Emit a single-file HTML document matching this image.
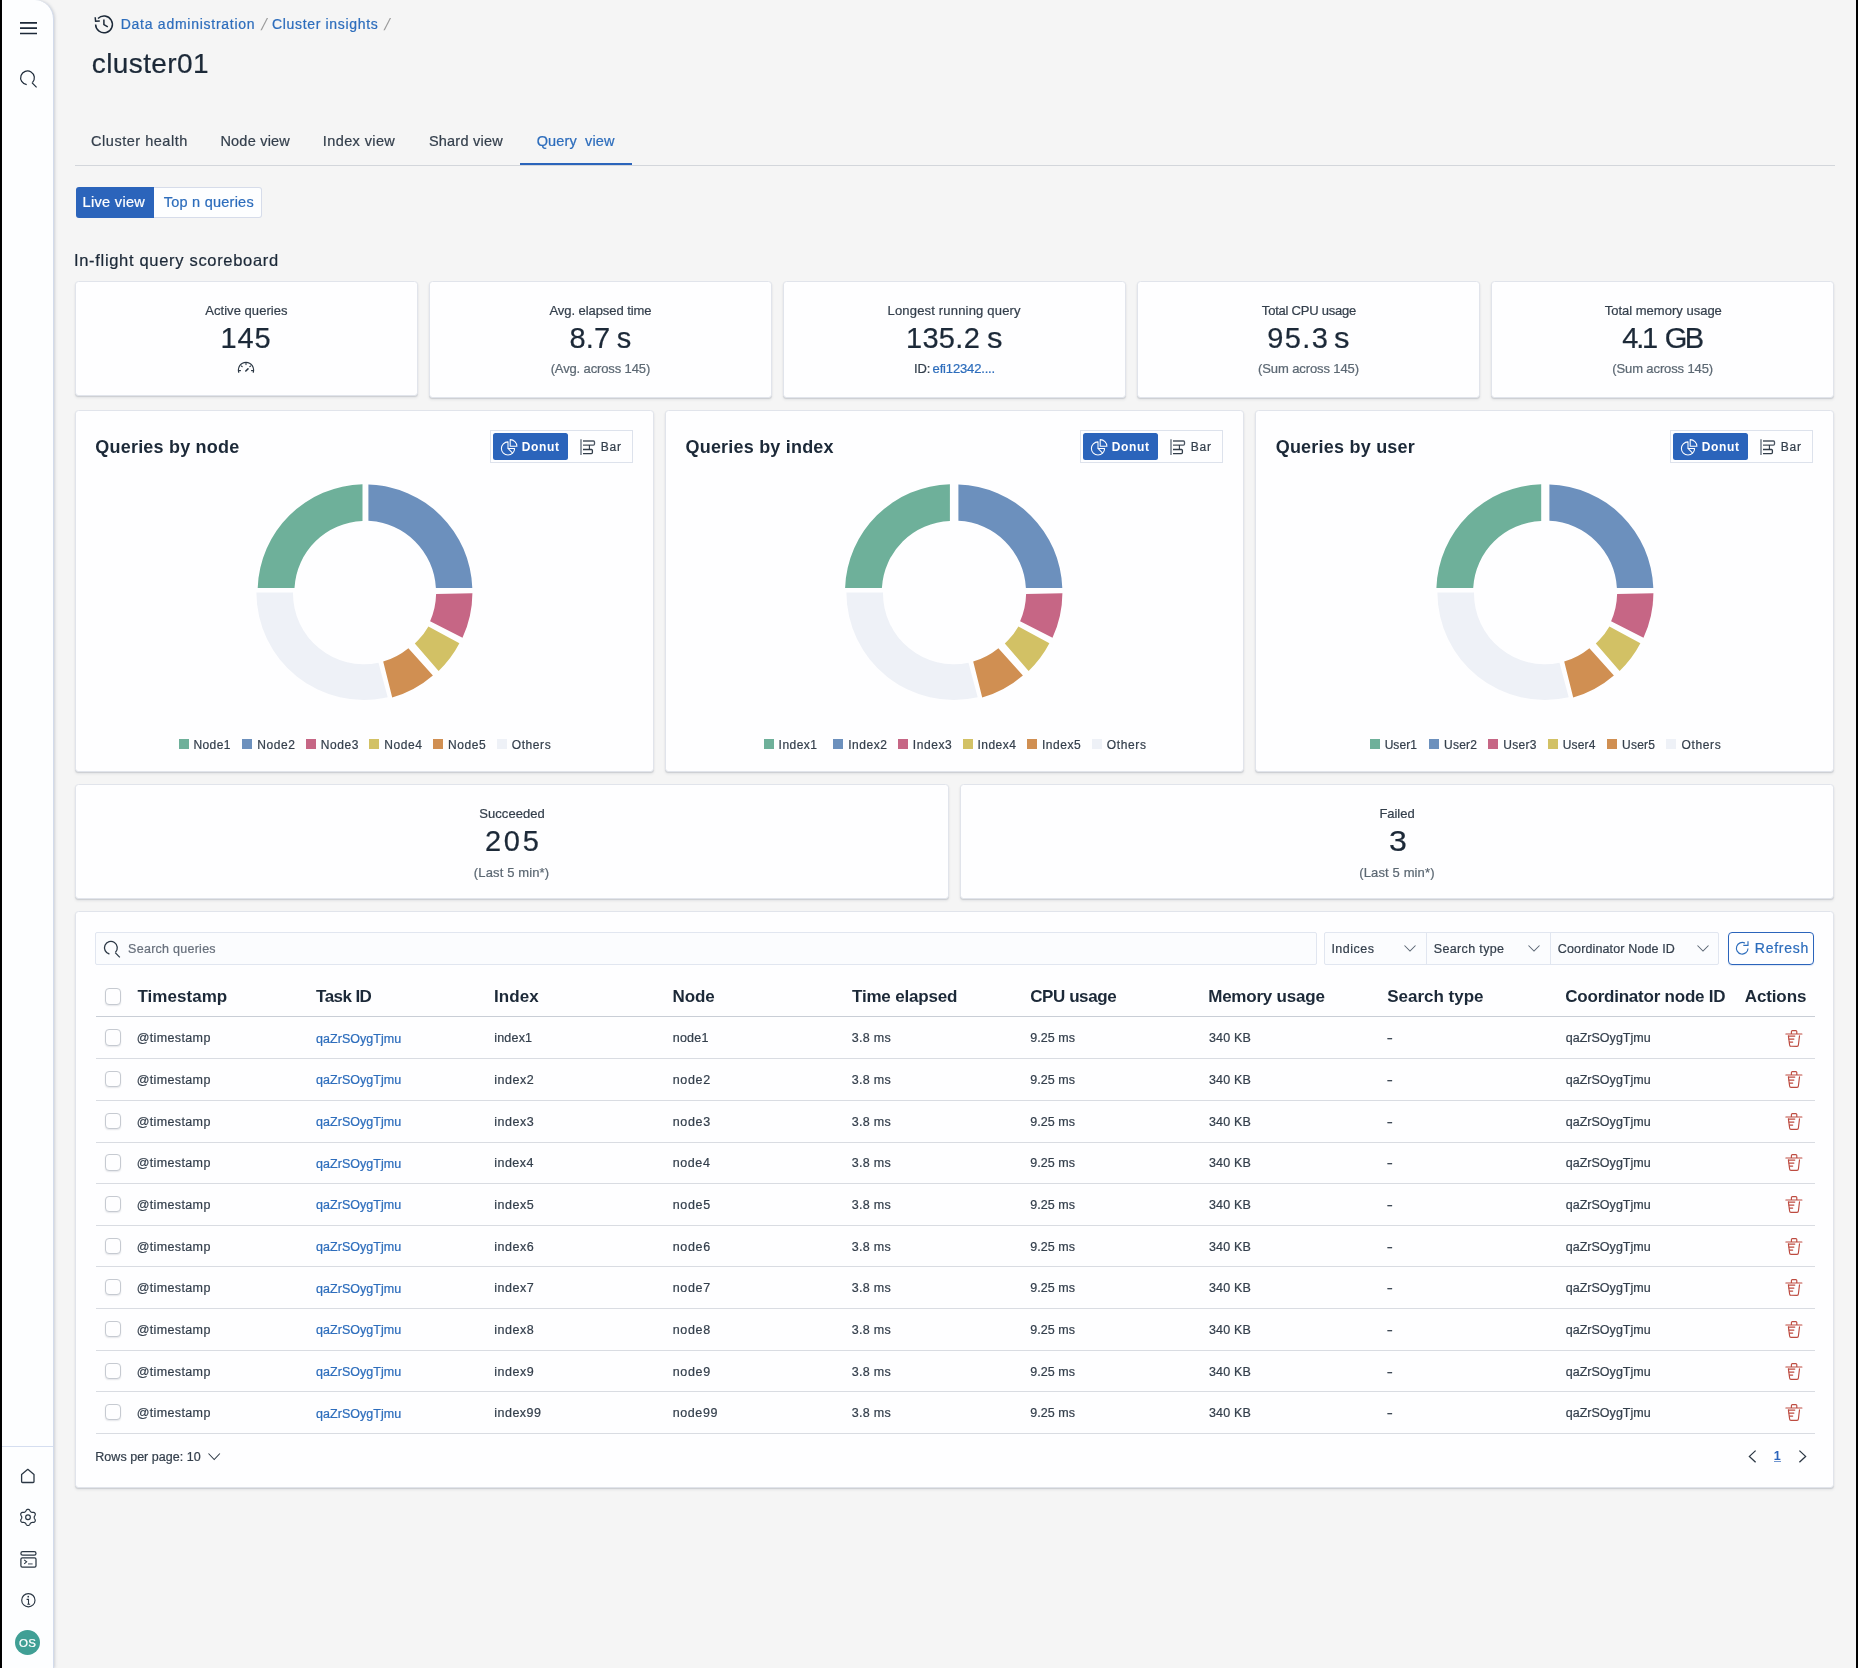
<!DOCTYPE html>
<html lang="en"><head><meta charset="utf-8"><title>cluster01 - Query view</title>
<style>
html,body{margin:0;padding:0}
body{width:1858px;height:1668px;position:relative;overflow:hidden;background:#f5f5f5;font-family:"Liberation Sans",sans-serif;}
#root{position:absolute;left:0;top:0;width:1858px;height:1668px;will-change:transform}
.t{position:absolute;white-space:pre;line-height:1;-webkit-text-stroke:0.22px currentColor;}
.b{position:absolute;box-sizing:border-box;}
.card{background:#fefeff;border:1px solid #e1e4eb;border-radius:3.5px;box-shadow:0 1px 1px rgba(40,50,70,.14),0 2px 3px rgba(40,50,70,.08);}
svg{position:absolute;overflow:visible}

.side{background:#fdfeff;border-right:1px solid #d3dbeb;border-top-right-radius:19px;box-shadow:1px 0 3px rgba(70,80,110,.22);}
.blk{background:#000}

</style></head><body><div id="root">
<div class="b blk" style="left:0px;top:0px;width:2px;height:1668px;"></div>
<div class="b blk" style="left:1856px;top:0px;width:2px;height:1668px;"></div>
<div class="b side" style="left:2px;top:0px;width:52px;height:1668px;"></div>
<div class="b " style="left:2px;top:1446px;width:51px;height:1px;background:#d5def0"></div>
<svg style="left:20px;top:21px" width="18" height="14" viewBox="0 0 18 14"><g stroke="#1c2938" stroke-width="1.7"><path d="M0 1.9H17M0 7.2H17M0 12.5H17"/></g></svg>
<svg style="left:19px;top:69.8px" width="20" height="20" viewBox="0 0 20 20" fill="none" stroke="#1c2938" stroke-width="1.2"><path d="M7.7 14.6A6.85 6.85 0 1 1 13.5 12.5"/><path d="M12.9 12.6L17.6 17.3"/></svg>
<svg style="left:19px;top:1467px" width="18" height="18" viewBox="0 0 18 18" fill="none" stroke="#2b3744" stroke-width="1.3" stroke-linejoin="round"><path d="M2.6 7.4L8.8 2.3L15 7.4V14.6a.9.9 0 0 1-.9.9H3.5a.9.9 0 0 1-.9-.9Z"/></svg>
<svg style="left:18px;top:1507px" width="20" height="20" viewBox="0 0 20 20" fill="none" stroke="#2b3744" stroke-width="1.2" stroke-linejoin="round"><path d="M10.00 2.30L10.53 2.37L11.03 2.58L11.49 2.93L11.85 3.49L12.15 4.07L12.46 4.47L12.77 4.79L13.10 5.03L13.47 5.20L13.91 5.31L14.41 5.37L15.06 5.34L15.72 5.38L16.25 5.60L16.69 5.93L17.01 6.35L17.22 6.84L17.28 7.38L17.21 7.95L16.91 8.55L16.56 9.10L16.36 9.56L16.24 9.99L16.20 10.40L16.24 10.81L16.36 11.24L16.56 11.70L16.91 12.25L17.21 12.85L17.28 13.42L17.22 13.96L17.01 14.45L16.69 14.87L16.25 15.20L15.72 15.42L15.06 15.46L14.41 15.43L13.91 15.49L13.47 15.60L13.10 15.77L12.77 16.01L12.46 16.33L12.15 16.73L11.85 17.31L11.49 17.87L11.03 18.22L10.53 18.43L10.00 18.50L9.47 18.43L8.97 18.22L8.51 17.87L8.15 17.31L7.85 16.73L7.54 16.33L7.23 16.01L6.90 15.77L6.53 15.60L6.09 15.49L5.59 15.43L4.94 15.46L4.28 15.42L3.75 15.20L3.31 14.87L2.99 14.45L2.78 13.96L2.72 13.42L2.79 12.85L3.09 12.25L3.44 11.70L3.64 11.24L3.76 10.81L3.80 10.40L3.76 9.99L3.64 9.56L3.44 9.10L3.09 8.55L2.79 7.95L2.72 7.38L2.78 6.84L2.99 6.35L3.31 5.93L3.75 5.60L4.28 5.38L4.94 5.34L5.59 5.37L6.09 5.31L6.53 5.20L6.90 5.03L7.23 4.79L7.54 4.47L7.85 4.07L8.15 3.49L8.51 2.93L8.97 2.58L9.47 2.37Z"/><circle cx="10" cy="10.3" r="2.35"/></svg>
<svg style="left:19px;top:1550px" width="19" height="19" viewBox="0 0 19 19" fill="none" stroke="#2b3744" stroke-width="1.25"><rect x="1.9" y="1.7" width="15.1" height="3.4" rx="1.7"/><rect x="1.9" y="7.8" width="15.1" height="9.3" rx="1.4"/><path d="M5.2 9.9L7.6 11.8L5.2 13.8" stroke-width="1.1"/><path d="M9 13.9H13.6" stroke="#6b7480" stroke-width="1.3"/></svg>
<svg style="left:19px;top:1591px" width="18" height="18" viewBox="0 0 18 18" fill="none" stroke="#2b3744" stroke-width="1.15"><circle cx="9.35" cy="9.2" r="6.65"/><path d="M7.6 8.4H9.5V13.1M8.3 13.2H11.1" stroke-width="1.1"/><circle cx="9.25" cy="5.65" r=".85" fill="#2b3744" stroke="none"/></svg>
<div class="b " style="left:15px;top:1630px;width:25px;height:25px;background:#409f95;border-radius:50%"></div>
<div class="t" style="left:19.10px;top:1638.00px;font-size:11.5px;color:#fff;letter-spacing:0.250px;">OS</div>
<svg style="left:93px;top:14px" width="22" height="21" viewBox="0 0 22 21" fill="none" stroke="#1c2938" stroke-width="1.5"><path d="M2.6 10.6A8.4 8.4 0 1 0 5 4.5"/><path d="M2.2 3.2L2.6 7.3L6.8 7" stroke-linejoin="miter"/><path d="M10.9 5.6V10.6L14.8 12.8"/></svg>
<div class="t" style="left:120.70px;top:17.00px;font-size:14px;color:#2d6dbc;letter-spacing:0.742px;">Data administration</div>
<div class="t" style="left:261.60px;top:16.00px;font-size:16.5px;color:#9c9c9c;letter-spacing:0.000px;transform:skewX(-14deg);-webkit-text-stroke:0">/</div>
<div class="t" style="left:272.00px;top:17.00px;font-size:14px;color:#2d6dbc;letter-spacing:0.670px;">Cluster insights</div>
<div class="t" style="left:384.70px;top:16.00px;font-size:16.5px;color:#9c9c9c;letter-spacing:0.000px;transform:skewX(-14deg);-webkit-text-stroke:0">/</div>
<div class="t" style="left:91.80px;top:50.00px;font-size:28px;color:#1c2938;letter-spacing:0.394px;">cluster01</div>
<div class="b " style="left:75px;top:165px;width:1760px;height:1px;background:#d3d6db"></div>
<div class="t" style="left:91.10px;top:134.00px;font-size:14.5px;color:#343f4c;letter-spacing:0.519px;">Cluster health</div>
<div class="t" style="left:220.40px;top:134.00px;font-size:14.5px;color:#343f4c;letter-spacing:0.219px;">Node view</div>
<div class="t" style="left:322.85px;top:134.00px;font-size:14.5px;color:#343f4c;letter-spacing:0.383px;">Index view</div>
<div class="t" style="left:428.90px;top:134.00px;font-size:14.5px;color:#343f4c;letter-spacing:0.228px;">Shard view</div>
<div class="t" style="left:536.70px;top:134.00px;font-size:14.5px;color:#2d6dbc;letter-spacing:0.120px;">Query  view</div>
<div class="b " style="left:520px;top:163px;width:112px;height:2px;background:#2b64bb"></div>
<div class="b " style="left:76px;top:187px;width:78px;height:31px;background:#2b64bb;border-radius:3px 0 0 3px"></div>
<div class="b " style="left:154px;top:187px;width:107.5px;height:31px;background:#fdfeff;border:1px solid #d6dcea;border-left:0;border-radius:0 3px 3px 0"></div>
<div class="t" style="left:82.60px;top:195.00px;font-size:14.5px;color:#fff;letter-spacing:0.319px;">Live view</div>
<div class="t" style="left:163.75px;top:195.00px;font-size:14.5px;color:#2d6dbc;letter-spacing:0.237px;">Top n queries</div>
<div class="t" style="left:74.00px;top:252.00px;font-size:16.5px;color:#1c2938;letter-spacing:0.682px;">In-flight query scoreboard</div>
<div class="b card" style="left:75px;top:281px;width:343px;height:115px;"></div>
<div class="b card" style="left:429px;top:281px;width:343px;height:117px;"></div>
<div class="b card" style="left:783px;top:281px;width:343px;height:117px;"></div>
<div class="b card" style="left:1137px;top:281px;width:343px;height:117px;"></div>
<div class="b card" style="left:1491px;top:281px;width:343px;height:117px;"></div>
<div class="t" style="left:205.20px;top:304.00px;font-size:13px;color:#343f4c;letter-spacing:0.054px;">Active queries</div>
<div class="t" style="left:220.50px;top:324.00px;font-size:29px;color:#1c2938;letter-spacing:0.875px;">145</div>
<div class="t" style="left:549.40px;top:304.00px;font-size:13px;color:#343f4c;letter-spacing:-0.059px;">Avg. elapsed time</div>
<div class="t" style="left:569.45px;top:324.00px;font-size:29px;color:#1c2938;letter-spacing:0.225px;">8.7</div>
<div class="t" style="left:616.85px;top:324.00px;font-size:29px;color:#1c2938;letter-spacing:0.000px;">s</div>
<div class="t" style="left:550.65px;top:362.00px;font-size:13px;color:#5c6873;letter-spacing:-0.128px;">(Avg. across 145)</div>
<div class="t" style="left:887.50px;top:304.00px;font-size:13px;color:#343f4c;letter-spacing:0.185px;">Longest running query</div>
<div class="t" style="left:905.90px;top:324.00px;font-size:29px;color:#1c2938;letter-spacing:0.363px;">135.2</div>
<div class="t" style="left:986.55px;top:324.00px;font-size:29px;color:#1c2938;letter-spacing:0.000px;transform:scaleX(1.067);transform-origin:0.75px 50%;">s</div>
<div class="t" style="left:914.00px;top:362.00px;font-size:13px;color:#343f4c;letter-spacing:-0.150px;">ID:</div>
<div class="t" style="left:932.60px;top:362.00px;font-size:13px;color:#2d6dbc;letter-spacing:-0.159px;">efi12342....</div>
<div class="t" style="left:1261.85px;top:304.00px;font-size:13px;color:#343f4c;letter-spacing:-0.218px;">Total CPU usage</div>
<div class="t" style="left:1267.15px;top:324.00px;font-size:29px;color:#1c2938;letter-spacing:1.400px;">95.3</div>
<div class="t" style="left:1334.45px;top:324.00px;font-size:29px;color:#1c2938;letter-spacing:0.000px;transform:scaleX(1.067);transform-origin:0.75px 50%;">s</div>
<div class="t" style="left:1258.05px;top:362.00px;font-size:13px;color:#5c6873;letter-spacing:-0.110px;">(Sum across 145)</div>
<div class="t" style="left:1604.65px;top:304.00px;font-size:13px;color:#343f4c;letter-spacing:0.009px;">Total memory usage</div>
<div class="t" style="left:1622.30px;top:324.00px;font-size:29px;color:#1c2938;letter-spacing:-2.300px;">4.1</div>
<div class="t" style="left:1664.85px;top:324.00px;font-size:29px;color:#1c2938;letter-spacing:-2.550px;">GB</div>
<div class="t" style="left:1612.25px;top:362.00px;font-size:13px;color:#5c6873;letter-spacing:-0.110px;">(Sum across 145)</div>
<svg style="left:236.7px;top:361px" width="18" height="13" viewBox="0 0 18 13" fill="none" stroke="#2b3744" stroke-width="1.12" stroke-linecap="round"><path d="M1.9 11.7A7.6 7.6 0 1 1 16.1 11.7" stroke-linecap="butt"/><path d="M8.8 10L11 7.9" stroke-width="1.55"/><path d="M9 1.8V3.6M4.4 5L5.2 5.7M13.6 5L12.8 5.7M1.9 9.6H3.5M16.1 9.6H14.5" stroke-width="1.1"/></svg>
<div class="b card" style="left:75px;top:410px;width:579px;height:362px;"></div>
<div class="b " style="left:490px;top:430px;width:143px;height:33px;border:1px solid #dde2ec;background:#fefeff"></div>
<div class="b " style="left:493px;top:433px;width:75px;height:27px;background:#2b64bb;border-radius:2.5px"></div>
<div class="t" style="left:521.85px;top:441.00px;font-size:12px;color:#fff;letter-spacing:0.600px;font-weight:700;-webkit-text-stroke:0;">Donut</div>
<div class="t" style="left:600.85px;top:441.00px;font-size:12px;color:#343f4c;letter-spacing:0.700px;">Bar</div>
<svg style="left:500px;top:438px" width="18" height="18" viewBox="0 0 18 18" fill="none" stroke="#fff" stroke-width="1.05" stroke-linejoin="round"><path d="M8 3.85A6.6 6.6 0 1 0 14.6 10.45H8Z"/><path d="M8 10.45L12.65 15.1"/><path d="M10.2 8.3V1.6A6.7 6.7 0 0 1 16.9 8.3Z"/></svg>
<svg style="left:579px;top:439px" width="17" height="17" viewBox="0 0 17 17" fill="none" stroke="#323d4a" stroke-width="1.3"><path d="M2 0.3V16" stroke="#8a929d" stroke-width="1.8"/><path d="M4 2H14.5a1 1 0 0 1 1 1V5.1a1 1 0 0 1-1 1H4" stroke="#4a5461"/><path d="M10.4 6.1V10.5" stroke-width="1.1"/><path d="M4 10.5H12.4a1 1 0 0 1 1 1V13.6a1 1 0 0 1-1 1H4"/></svg>
<div class="b card" style="left:665px;top:410px;width:579px;height:362px;"></div>
<div class="b " style="left:1080px;top:430px;width:143px;height:33px;border:1px solid #dde2ec;background:#fefeff"></div>
<div class="b " style="left:1083px;top:433px;width:75px;height:27px;background:#2b64bb;border-radius:2.5px"></div>
<div class="t" style="left:1111.85px;top:441.00px;font-size:12px;color:#fff;letter-spacing:0.600px;font-weight:700;-webkit-text-stroke:0;">Donut</div>
<div class="t" style="left:1190.85px;top:441.00px;font-size:12px;color:#343f4c;letter-spacing:0.700px;">Bar</div>
<svg style="left:1090px;top:438px" width="18" height="18" viewBox="0 0 18 18" fill="none" stroke="#fff" stroke-width="1.05" stroke-linejoin="round"><path d="M8 3.85A6.6 6.6 0 1 0 14.6 10.45H8Z"/><path d="M8 10.45L12.65 15.1"/><path d="M10.2 8.3V1.6A6.7 6.7 0 0 1 16.9 8.3Z"/></svg>
<svg style="left:1169px;top:439px" width="17" height="17" viewBox="0 0 17 17" fill="none" stroke="#323d4a" stroke-width="1.3"><path d="M2 0.3V16" stroke="#8a929d" stroke-width="1.8"/><path d="M4 2H14.5a1 1 0 0 1 1 1V5.1a1 1 0 0 1-1 1H4" stroke="#4a5461"/><path d="M10.4 6.1V10.5" stroke-width="1.1"/><path d="M4 10.5H12.4a1 1 0 0 1 1 1V13.6a1 1 0 0 1-1 1H4"/></svg>
<div class="b card" style="left:1255px;top:410px;width:579px;height:362px;"></div>
<div class="b " style="left:1670px;top:430px;width:143px;height:33px;border:1px solid #dde2ec;background:#fefeff"></div>
<div class="b " style="left:1673px;top:433px;width:75px;height:27px;background:#2b64bb;border-radius:2.5px"></div>
<div class="t" style="left:1701.85px;top:441.00px;font-size:12px;color:#fff;letter-spacing:0.600px;font-weight:700;-webkit-text-stroke:0;">Donut</div>
<div class="t" style="left:1780.85px;top:441.00px;font-size:12px;color:#343f4c;letter-spacing:0.700px;">Bar</div>
<svg style="left:1680px;top:438px" width="18" height="18" viewBox="0 0 18 18" fill="none" stroke="#fff" stroke-width="1.05" stroke-linejoin="round"><path d="M8 3.85A6.6 6.6 0 1 0 14.6 10.45H8Z"/><path d="M8 10.45L12.65 15.1"/><path d="M10.2 8.3V1.6A6.7 6.7 0 0 1 16.9 8.3Z"/></svg>
<svg style="left:1759px;top:439px" width="17" height="17" viewBox="0 0 17 17" fill="none" stroke="#323d4a" stroke-width="1.3"><path d="M2 0.3V16" stroke="#8a929d" stroke-width="1.8"/><path d="M4 2H14.5a1 1 0 0 1 1 1V5.1a1 1 0 0 1-1 1H4" stroke="#4a5461"/><path d="M10.4 6.1V10.5" stroke-width="1.1"/><path d="M4 10.5H12.4a1 1 0 0 1 1 1V13.6a1 1 0 0 1-1 1H4"/></svg>
<div class="t" style="left:95.30px;top:438.00px;font-size:18px;color:#1c2938;letter-spacing:0.207px;font-weight:700;-webkit-text-stroke:0;">Queries by node</div>
<div class="t" style="left:685.50px;top:438.00px;font-size:18px;color:#1c2938;letter-spacing:0.200px;font-weight:700;-webkit-text-stroke:0;">Queries by index</div>
<div class="t" style="left:1275.70px;top:438.00px;font-size:18px;color:#1c2938;letter-spacing:0.218px;font-weight:700;-webkit-text-stroke:0;">Queries by user</div>
<svg style="left:0px;top:0" width="600" height="800" viewBox="0 0 600 800"><g transform="translate(0 0)"><path fill="#6eb09a" d="M257.70 587.90A107.4 107.4 0 0 1 362.50 484.30L362.50 521.10A70.6 70.6 0 0 0 294.50 587.90Z"/></g><path fill="#6c90bd" d="M368.40 484.40A107.3 107.3 0 0 1 472.30 588.00L435.90 588.00A71 71 0 0 0 368.40 520.80Z"/><path fill="#c66685" d="M472.40 593.20A107.5 107.5 0 0 1 462.50 637.70L430.10 621.20A71 71 0 0 0 436.10 594.00Z"/><path fill="#d2c165" d="M459.40 643.30A107.5 107.5 0 0 1 438.60 671.00L414.80 643.40A71 71 0 0 0 428.40 626.40Z"/><path fill="#d08f52" d="M432.90 675.40A107.5 107.5 0 0 1 392.20 697.40L383.20 661.60A71 71 0 0 0 408.40 648.30Z"/><path fill="#eef1f7" d="M387.70 697.30A107.5 107.5 0 0 1 256.40 592.40L293.00 592.40A71 71 0 0 0 378.50 662.80Z"/></svg>
<svg style="left:590px;top:0" width="600" height="800" viewBox="0 0 600 800"><g transform="translate(-2.6 0)"><path fill="#6eb09a" d="M257.70 587.90A107.4 107.4 0 0 1 362.50 484.30L362.50 521.10A70.6 70.6 0 0 0 294.50 587.90Z"/></g><path fill="#6c90bd" d="M368.40 484.40A107.3 107.3 0 0 1 472.30 588.00L435.90 588.00A71 71 0 0 0 368.40 520.80Z"/><path fill="#c66685" d="M472.40 593.20A107.5 107.5 0 0 1 462.50 637.70L430.10 621.20A71 71 0 0 0 436.10 594.00Z"/><path fill="#d2c165" d="M459.40 643.30A107.5 107.5 0 0 1 438.60 671.00L414.80 643.40A71 71 0 0 0 428.40 626.40Z"/><path fill="#d08f52" d="M432.90 675.40A107.5 107.5 0 0 1 392.20 697.40L383.20 661.60A71 71 0 0 0 408.40 648.30Z"/><path fill="#eef1f7" d="M387.70 697.30A107.5 107.5 0 0 1 256.40 592.40L293.00 592.40A71 71 0 0 0 378.50 662.80Z"/></svg>
<svg style="left:1180.6px;top:0" width="600" height="800" viewBox="0 0 600 800"><g transform="translate(-2.3 0)"><path fill="#6eb09a" d="M257.70 587.90A107.4 107.4 0 0 1 362.50 484.30L362.50 521.10A70.6 70.6 0 0 0 294.50 587.90Z"/></g><path fill="#6c90bd" d="M368.40 484.40A107.3 107.3 0 0 1 472.30 588.00L435.90 588.00A71 71 0 0 0 368.40 520.80Z"/><path fill="#c66685" d="M472.40 593.20A107.5 107.5 0 0 1 462.50 637.70L430.10 621.20A71 71 0 0 0 436.10 594.00Z"/><path fill="#d2c165" d="M459.40 643.30A107.5 107.5 0 0 1 438.60 671.00L414.80 643.40A71 71 0 0 0 428.40 626.40Z"/><path fill="#d08f52" d="M432.90 675.40A107.5 107.5 0 0 1 392.20 697.40L383.20 661.60A71 71 0 0 0 408.40 648.30Z"/><path fill="#eef1f7" d="M387.70 697.30A107.5 107.5 0 0 1 256.40 592.40L293.00 592.40A71 71 0 0 0 378.50 662.80Z"/></svg>
<div class="b " style="left:178.5px;top:739.3px;width:10.300000000000011px;height:10.0px;background:#6eb09a"></div>
<div class="t" style="left:193.55px;top:739.00px;font-size:12px;color:#343f4c;letter-spacing:0.362px;">Node1</div>
<div class="b " style="left:242.0px;top:739.3px;width:10.300000000000011px;height:10.0px;background:#6c90bd"></div>
<div class="t" style="left:257.15px;top:739.00px;font-size:12px;color:#343f4c;letter-spacing:0.588px;">Node2</div>
<div class="b " style="left:305.5px;top:739.3px;width:10.300000000000011px;height:10.0px;background:#c66685"></div>
<div class="t" style="left:320.75px;top:739.00px;font-size:12px;color:#343f4c;letter-spacing:0.588px;">Node3</div>
<div class="b " style="left:369.0px;top:739.3px;width:10.300000000000011px;height:10.0px;background:#d2c165"></div>
<div class="t" style="left:384.35px;top:739.00px;font-size:12px;color:#343f4c;letter-spacing:0.525px;">Node4</div>
<div class="b " style="left:432.5px;top:739.3px;width:10.300000000000011px;height:10.0px;background:#d08f52"></div>
<div class="t" style="left:447.95px;top:739.00px;font-size:12px;color:#343f4c;letter-spacing:0.588px;">Node5</div>
<div class="b " style="left:496.5px;top:739.3px;width:10.300000000000011px;height:10.0px;background:#eef1f7"></div>
<div class="t" style="left:511.80px;top:739.00px;font-size:12px;color:#343f4c;letter-spacing:0.570px;">Others</div>
<div class="b " style="left:763.5px;top:739.3px;width:10.299999999999955px;height:10.0px;background:#6eb09a"></div>
<div class="t" style="left:778.60px;top:739.00px;font-size:12px;color:#343f4c;letter-spacing:0.460px;">Index1</div>
<div class="b " style="left:833.0px;top:739.3px;width:10.299999999999955px;height:10.0px;background:#6c90bd"></div>
<div class="t" style="left:848.20px;top:739.00px;font-size:12px;color:#343f4c;letter-spacing:0.560px;">Index2</div>
<div class="b " style="left:898.0px;top:739.3px;width:10.299999999999955px;height:10.0px;background:#c66685"></div>
<div class="t" style="left:912.80px;top:739.00px;font-size:12px;color:#343f4c;letter-spacing:0.560px;">Index3</div>
<div class="b " style="left:962.5px;top:739.3px;width:10.299999999999955px;height:10.0px;background:#d2c165"></div>
<div class="t" style="left:977.40px;top:739.00px;font-size:12px;color:#343f4c;letter-spacing:0.510px;">Index4</div>
<div class="b " style="left:1027.0px;top:739.3px;width:10.299999999999955px;height:10.0px;background:#d08f52"></div>
<div class="t" style="left:1041.90px;top:739.00px;font-size:12px;color:#343f4c;letter-spacing:0.560px;">Index5</div>
<div class="b " style="left:1091.5px;top:739.3px;width:10.299999999999955px;height:10.0px;background:#eef1f7"></div>
<div class="t" style="left:1106.80px;top:739.00px;font-size:12px;color:#343f4c;letter-spacing:0.630px;">Others</div>
<div class="b " style="left:1369.5px;top:739.3px;width:10.299999999999955px;height:10.0px;background:#6eb09a"></div>
<div class="t" style="left:1384.65px;top:739.00px;font-size:12px;color:#343f4c;letter-spacing:0.062px;">User1</div>
<div class="b " style="left:1429.0px;top:739.3px;width:10.299999999999955px;height:10.0px;background:#6c90bd"></div>
<div class="t" style="left:1444.05px;top:739.00px;font-size:12px;color:#343f4c;letter-spacing:0.238px;">User2</div>
<div class="b " style="left:1488.0px;top:739.3px;width:10.299999999999955px;height:10.0px;background:#c66685"></div>
<div class="t" style="left:1503.35px;top:739.00px;font-size:12px;color:#343f4c;letter-spacing:0.238px;">User3</div>
<div class="b " style="left:1547.5px;top:739.3px;width:10.299999999999955px;height:10.0px;background:#d2c165"></div>
<div class="t" style="left:1562.65px;top:739.00px;font-size:12px;color:#343f4c;letter-spacing:0.175px;">User4</div>
<div class="b " style="left:1607.0px;top:739.3px;width:10.299999999999955px;height:10.0px;background:#d08f52"></div>
<div class="t" style="left:1622.05px;top:739.00px;font-size:12px;color:#343f4c;letter-spacing:0.238px;">User5</div>
<div class="b " style="left:1666.0px;top:739.3px;width:10.299999999999955px;height:10.0px;background:#eef1f7"></div>
<div class="t" style="left:1681.60px;top:739.00px;font-size:12px;color:#343f4c;letter-spacing:0.610px;">Others</div>
<div class="b card" style="left:75px;top:784px;width:874px;height:115px;"></div>
<div class="b card" style="left:960px;top:784px;width:874px;height:115px;"></div>
<div class="t" style="left:479.30px;top:807.00px;font-size:13px;color:#343f4c;letter-spacing:0.056px;">Succeeded</div>
<div class="t" style="left:484.90px;top:827.00px;font-size:29px;color:#1c2938;letter-spacing:2.850px;">205</div>
<div class="t" style="left:473.85px;top:866.00px;font-size:13px;color:#5c6873;letter-spacing:0.129px;">(Last 5 min*)</div>
<div class="t" style="left:1379.40px;top:807.00px;font-size:13px;color:#343f4c;letter-spacing:-0.030px;">Failed</div>
<div class="t" style="left:1388.50px;top:827.00px;font-size:29px;color:#1c2938;letter-spacing:0.000px;transform:scaleX(1.107);transform-origin:1.00px 50%;">3</div>
<div class="t" style="left:1359.25px;top:866.00px;font-size:13px;color:#5c6873;letter-spacing:0.129px;">(Last 5 min*)</div>
<div class="b card" style="left:75px;top:911px;width:1759px;height:577px;"></div>
<div class="b " style="left:95px;top:932px;width:1221.5px;height:32.5px;background:#fbfcfe;border:1px solid #e1e6f0;border-radius:2px"></div>
<svg style="left:103px;top:939.6px" width="20" height="20" viewBox="0 0 20 20" fill="none" stroke="#2b3744" stroke-width="1.3"><path d="M6.4 14A6.4 6.4 0 1 1 12.5 12.2"/><path d="M12.2 12.6L16.8 17.4"/></svg>
<div class="t" style="left:128.10px;top:943.00px;font-size:12.5px;color:#69717d;letter-spacing:0.265px;">Search queries</div>
<div class="b " style="left:1324px;top:932px;width:394.5px;height:33px;background:#fbfcfe;border:1px solid #e1e6f0;border-radius:2px"></div>
<div class="b " style="left:1426px;top:933px;width:1px;height:31px;background:#e1e6f0"></div>
<div class="b " style="left:1550px;top:933px;width:1px;height:31px;background:#e1e6f0"></div>
<div class="t" style="left:1331.40px;top:943.00px;font-size:12.5px;color:#343f4c;letter-spacing:0.492px;">Indices</div>
<div class="t" style="left:1433.70px;top:943.00px;font-size:12.5px;color:#343f4c;letter-spacing:0.365px;">Search type</div>
<div class="t" style="left:1557.80px;top:943.00px;font-size:12.5px;color:#343f4c;letter-spacing:0.136px;">Coordinator Node ID</div>
<svg style="left:1404.4px;top:945.3px" width="12" height="6.8" viewBox="0 0 12 6.8" fill="none" stroke="#5a6573" stroke-width="1.05"><path d="M0.5 0.5L6.0 6.1L11.5 0.5"/></svg>
<svg style="left:1528.2px;top:945.3px" width="12" height="6.8" viewBox="0 0 12 6.8" fill="none" stroke="#5a6573" stroke-width="1.05"><path d="M0.5 0.5L6.0 6.1L11.5 0.5"/></svg>
<svg style="left:1696.6px;top:945.3px" width="12" height="6.8" viewBox="0 0 12 6.8" fill="none" stroke="#5a6573" stroke-width="1.05"><path d="M0.5 0.5L6.0 6.1L11.5 0.5"/></svg>
<div class="b " style="left:1728px;top:932px;width:86px;height:33px;background:#fefeff;border:1px solid #2b64bb;border-radius:4px;box-shadow:0 1px 1px rgba(43,100,187,.15)"></div>
<svg style="left:1735px;top:941px" width="15" height="15" viewBox="0 0 15 15" fill="none" stroke="#2d6dbc" stroke-width="1.15"><path d="M9.92 2.13A5.8 5.8 0 1 0 13 7.45"/><path d="M13 0.3V4.3H8.3"/></svg>
<div class="t" style="left:1754.80px;top:941.00px;font-size:14px;color:#2d6dbc;letter-spacing:0.742px;">Refresh</div>
<div class="t" style="left:137.40px;top:988.00px;font-size:17px;color:#1c2938;letter-spacing:0.044px;font-weight:700;-webkit-text-stroke:0;">Timestamp</div>
<div class="t" style="left:316.10px;top:988.00px;font-size:17px;color:#1c2938;letter-spacing:-0.575px;font-weight:700;-webkit-text-stroke:0;">Task ID</div>
<div class="t" style="left:494.00px;top:988.00px;font-size:17px;color:#1c2938;letter-spacing:0.050px;font-weight:700;-webkit-text-stroke:0;">Index</div>
<div class="t" style="left:672.50px;top:988.00px;font-size:17px;color:#1c2938;letter-spacing:-0.100px;font-weight:700;-webkit-text-stroke:0;">Node</div>
<div class="t" style="left:852.00px;top:988.00px;font-size:17px;color:#1c2938;letter-spacing:-0.182px;font-weight:700;-webkit-text-stroke:0;">Time elapsed</div>
<div class="t" style="left:1030.20px;top:988.00px;font-size:17px;color:#1c2938;letter-spacing:-0.419px;font-weight:700;-webkit-text-stroke:0;">CPU usage</div>
<div class="t" style="left:1208.20px;top:988.00px;font-size:17px;color:#1c2938;letter-spacing:-0.218px;font-weight:700;-webkit-text-stroke:0;">Memory usage</div>
<div class="t" style="left:1387.20px;top:988.00px;font-size:17px;color:#1c2938;letter-spacing:0.000px;font-weight:700;-webkit-text-stroke:0;">Search type</div>
<div class="t" style="left:1565.30px;top:988.00px;font-size:17px;color:#1c2938;letter-spacing:-0.225px;font-weight:700;-webkit-text-stroke:0;">Coordinator node ID</div>
<div class="t" style="left:1744.75px;top:988.00px;font-size:17px;color:#1c2938;letter-spacing:-0.125px;font-weight:700;-webkit-text-stroke:0;">Actions</div>
<div class="b " style="left:104.5px;top:988.4px;width:16.200000000000003px;height:16.200000000000045px;background:#fefeff;border:1px solid #c6cad1;border-radius:4px;box-shadow:0 1px 1.5px rgba(50,60,80,.12)"></div>
<div class="b " style="left:95.5px;top:1016px;width:1719.5px;height:1px;background:#c9ced6"></div>
<div class="b " style="left:104.5px;top:1029.4px;width:16.200000000000003px;height:16.200000000000045px;background:#fefeff;border:1px solid #c6cad1;border-radius:4px;box-shadow:0 1px 1.5px rgba(50,60,80,.12)"></div>
<div class="t" style="left:136.65px;top:1032.00px;font-size:12.5px;color:#343f4c;letter-spacing:0.372px;">@timestamp</div>
<div class="t" style="left:316.00px;top:1033.00px;font-size:12.5px;color:#2d6dbc;letter-spacing:0.045px;">qaZrSOygTjmu</div>
<div class="t" style="left:494.25px;top:1032.00px;font-size:12.5px;color:#343f4c;letter-spacing:0.190px;">index1</div>
<div class="t" style="left:672.75px;top:1032.00px;font-size:12.5px;color:#343f4c;letter-spacing:0.225px;">node1</div>
<div class="t" style="left:851.75px;top:1032.00px;font-size:12.5px;color:#343f4c;letter-spacing:0.280px;">3.8 ms</div>
<div class="t" style="left:1030.20px;top:1032.00px;font-size:12.5px;color:#343f4c;letter-spacing:0.042px;">9.25 ms</div>
<div class="t" style="left:1208.95px;top:1032.00px;font-size:12.5px;color:#343f4c;letter-spacing:0.170px;">340 KB</div>
<div class="t" style="left:1387.20px;top:1032.00px;font-size:12.5px;color:#343f4c;letter-spacing:0.000px;transform:scaleX(1.446);transform-origin:0.50px 50%;">-</div>
<div class="t" style="left:1565.70px;top:1032.00px;font-size:12.5px;color:#343f4c;letter-spacing:0.027px;">qaZrSOygTjmu</div>
<svg style="left:1785px;top:1028.50px" width="18" height="18" viewBox="0 0 18 18" fill="none" stroke="#bd4b40" stroke-width="1.15"><path d="M0.9 5H16.9" stroke-linecap="round"/><path d="M6.4 5V2.6a1 1 0 0 1 1-1H10.8a1 1 0 0 1 1 1V5"/><path d="M3.4 6.9L4.6 16a1.4 1.4 0 0 0 1.4 1.3H12a1.4 1.4 0 0 0 1.4-1.3L14.5 6.9" stroke-linecap="round"/><path d="M3.7 7.1H9.8M4 10.1H8.9M4.5 13.1H7.7" stroke-linecap="round"/></svg>
<div class="b " style="left:95.5px;top:1058px;width:1719.5px;height:1px;background:#d9dce2"></div>
<div class="b " style="left:104.5px;top:1071.0500000000002px;width:16.200000000000003px;height:16.200000000000045px;background:#fefeff;border:1px solid #c6cad1;border-radius:4px;box-shadow:0 1px 1.5px rgba(50,60,80,.12)"></div>
<div class="t" style="left:136.65px;top:1074.00px;font-size:12.5px;color:#343f4c;letter-spacing:0.372px;">@timestamp</div>
<div class="t" style="left:316.00px;top:1074.00px;font-size:12.5px;color:#2d6dbc;letter-spacing:0.045px;">qaZrSOygTjmu</div>
<div class="t" style="left:494.25px;top:1074.00px;font-size:12.5px;color:#343f4c;letter-spacing:0.530px;">index2</div>
<div class="t" style="left:672.75px;top:1074.00px;font-size:12.5px;color:#343f4c;letter-spacing:0.650px;">node2</div>
<div class="t" style="left:851.75px;top:1074.00px;font-size:12.5px;color:#343f4c;letter-spacing:0.280px;">3.8 ms</div>
<div class="t" style="left:1030.20px;top:1074.00px;font-size:12.5px;color:#343f4c;letter-spacing:0.042px;">9.25 ms</div>
<div class="t" style="left:1208.95px;top:1074.00px;font-size:12.5px;color:#343f4c;letter-spacing:0.170px;">340 KB</div>
<div class="t" style="left:1387.20px;top:1074.00px;font-size:12.5px;color:#343f4c;letter-spacing:0.000px;transform:scaleX(1.446);transform-origin:0.50px 50%;">-</div>
<div class="t" style="left:1565.70px;top:1074.00px;font-size:12.5px;color:#343f4c;letter-spacing:0.027px;">qaZrSOygTjmu</div>
<svg style="left:1785px;top:1070.15px" width="18" height="18" viewBox="0 0 18 18" fill="none" stroke="#bd4b40" stroke-width="1.15"><path d="M0.9 5H16.9" stroke-linecap="round"/><path d="M6.4 5V2.6a1 1 0 0 1 1-1H10.8a1 1 0 0 1 1 1V5"/><path d="M3.4 6.9L4.6 16a1.4 1.4 0 0 0 1.4 1.3H12a1.4 1.4 0 0 0 1.4-1.3L14.5 6.9" stroke-linecap="round"/><path d="M3.7 7.1H9.8M4 10.1H8.9M4.5 13.1H7.7" stroke-linecap="round"/></svg>
<div class="b " style="left:95.5px;top:1100px;width:1719.5px;height:1px;background:#d9dce2"></div>
<div class="b " style="left:104.5px;top:1112.7px;width:16.200000000000003px;height:16.200000000000045px;background:#fefeff;border:1px solid #c6cad1;border-radius:4px;box-shadow:0 1px 1.5px rgba(50,60,80,.12)"></div>
<div class="t" style="left:136.65px;top:1116.00px;font-size:12.5px;color:#343f4c;letter-spacing:0.372px;">@timestamp</div>
<div class="t" style="left:316.00px;top:1116.00px;font-size:12.5px;color:#2d6dbc;letter-spacing:0.045px;">qaZrSOygTjmu</div>
<div class="t" style="left:494.25px;top:1116.00px;font-size:12.5px;color:#343f4c;letter-spacing:0.530px;">index3</div>
<div class="t" style="left:672.75px;top:1116.00px;font-size:12.5px;color:#343f4c;letter-spacing:0.650px;">node3</div>
<div class="t" style="left:851.75px;top:1116.00px;font-size:12.5px;color:#343f4c;letter-spacing:0.280px;">3.8 ms</div>
<div class="t" style="left:1030.20px;top:1116.00px;font-size:12.5px;color:#343f4c;letter-spacing:0.042px;">9.25 ms</div>
<div class="t" style="left:1208.95px;top:1116.00px;font-size:12.5px;color:#343f4c;letter-spacing:0.170px;">340 KB</div>
<div class="t" style="left:1387.20px;top:1116.00px;font-size:12.5px;color:#343f4c;letter-spacing:0.000px;transform:scaleX(1.446);transform-origin:0.50px 50%;">-</div>
<div class="t" style="left:1565.70px;top:1116.00px;font-size:12.5px;color:#343f4c;letter-spacing:0.027px;">qaZrSOygTjmu</div>
<svg style="left:1785px;top:1111.80px" width="18" height="18" viewBox="0 0 18 18" fill="none" stroke="#bd4b40" stroke-width="1.15"><path d="M0.9 5H16.9" stroke-linecap="round"/><path d="M6.4 5V2.6a1 1 0 0 1 1-1H10.8a1 1 0 0 1 1 1V5"/><path d="M3.4 6.9L4.6 16a1.4 1.4 0 0 0 1.4 1.3H12a1.4 1.4 0 0 0 1.4-1.3L14.5 6.9" stroke-linecap="round"/><path d="M3.7 7.1H9.8M4 10.1H8.9M4.5 13.1H7.7" stroke-linecap="round"/></svg>
<div class="b " style="left:95.5px;top:1142px;width:1719.5px;height:1px;background:#d9dce2"></div>
<div class="b " style="left:104.5px;top:1154.3500000000001px;width:16.200000000000003px;height:16.200000000000045px;background:#fefeff;border:1px solid #c6cad1;border-radius:4px;box-shadow:0 1px 1.5px rgba(50,60,80,.12)"></div>
<div class="t" style="left:136.65px;top:1157.00px;font-size:12.5px;color:#343f4c;letter-spacing:0.372px;">@timestamp</div>
<div class="t" style="left:316.00px;top:1158.00px;font-size:12.5px;color:#2d6dbc;letter-spacing:0.045px;">qaZrSOygTjmu</div>
<div class="t" style="left:494.25px;top:1157.00px;font-size:12.5px;color:#343f4c;letter-spacing:0.480px;">index4</div>
<div class="t" style="left:672.75px;top:1157.00px;font-size:12.5px;color:#343f4c;letter-spacing:0.588px;">node4</div>
<div class="t" style="left:851.75px;top:1157.00px;font-size:12.5px;color:#343f4c;letter-spacing:0.280px;">3.8 ms</div>
<div class="t" style="left:1030.20px;top:1157.00px;font-size:12.5px;color:#343f4c;letter-spacing:0.042px;">9.25 ms</div>
<div class="t" style="left:1208.95px;top:1157.00px;font-size:12.5px;color:#343f4c;letter-spacing:0.170px;">340 KB</div>
<div class="t" style="left:1387.20px;top:1157.00px;font-size:12.5px;color:#343f4c;letter-spacing:0.000px;transform:scaleX(1.446);transform-origin:0.50px 50%;">-</div>
<div class="t" style="left:1565.70px;top:1157.00px;font-size:12.5px;color:#343f4c;letter-spacing:0.027px;">qaZrSOygTjmu</div>
<svg style="left:1785px;top:1153.45px" width="18" height="18" viewBox="0 0 18 18" fill="none" stroke="#bd4b40" stroke-width="1.15"><path d="M0.9 5H16.9" stroke-linecap="round"/><path d="M6.4 5V2.6a1 1 0 0 1 1-1H10.8a1 1 0 0 1 1 1V5"/><path d="M3.4 6.9L4.6 16a1.4 1.4 0 0 0 1.4 1.3H12a1.4 1.4 0 0 0 1.4-1.3L14.5 6.9" stroke-linecap="round"/><path d="M3.7 7.1H9.8M4 10.1H8.9M4.5 13.1H7.7" stroke-linecap="round"/></svg>
<div class="b " style="left:95.5px;top:1183px;width:1719.5px;height:1px;background:#d9dce2"></div>
<div class="b " style="left:104.5px;top:1196.0px;width:16.200000000000003px;height:16.200000000000045px;background:#fefeff;border:1px solid #c6cad1;border-radius:4px;box-shadow:0 1px 1.5px rgba(50,60,80,.12)"></div>
<div class="t" style="left:136.65px;top:1199.00px;font-size:12.5px;color:#343f4c;letter-spacing:0.372px;">@timestamp</div>
<div class="t" style="left:316.00px;top:1199.00px;font-size:12.5px;color:#2d6dbc;letter-spacing:0.045px;">qaZrSOygTjmu</div>
<div class="t" style="left:494.25px;top:1199.00px;font-size:12.5px;color:#343f4c;letter-spacing:0.530px;">index5</div>
<div class="t" style="left:672.75px;top:1199.00px;font-size:12.5px;color:#343f4c;letter-spacing:0.650px;">node5</div>
<div class="t" style="left:851.75px;top:1199.00px;font-size:12.5px;color:#343f4c;letter-spacing:0.280px;">3.8 ms</div>
<div class="t" style="left:1030.20px;top:1199.00px;font-size:12.5px;color:#343f4c;letter-spacing:0.042px;">9.25 ms</div>
<div class="t" style="left:1208.95px;top:1199.00px;font-size:12.5px;color:#343f4c;letter-spacing:0.170px;">340 KB</div>
<div class="t" style="left:1387.20px;top:1199.00px;font-size:12.5px;color:#343f4c;letter-spacing:0.000px;transform:scaleX(1.446);transform-origin:0.50px 50%;">-</div>
<div class="t" style="left:1565.70px;top:1199.00px;font-size:12.5px;color:#343f4c;letter-spacing:0.027px;">qaZrSOygTjmu</div>
<svg style="left:1785px;top:1195.10px" width="18" height="18" viewBox="0 0 18 18" fill="none" stroke="#bd4b40" stroke-width="1.15"><path d="M0.9 5H16.9" stroke-linecap="round"/><path d="M6.4 5V2.6a1 1 0 0 1 1-1H10.8a1 1 0 0 1 1 1V5"/><path d="M3.4 6.9L4.6 16a1.4 1.4 0 0 0 1.4 1.3H12a1.4 1.4 0 0 0 1.4-1.3L14.5 6.9" stroke-linecap="round"/><path d="M3.7 7.1H9.8M4 10.1H8.9M4.5 13.1H7.7" stroke-linecap="round"/></svg>
<div class="b " style="left:95.5px;top:1225px;width:1719.5px;height:1px;background:#d9dce2"></div>
<div class="b " style="left:104.5px;top:1237.65px;width:16.200000000000003px;height:16.200000000000045px;background:#fefeff;border:1px solid #c6cad1;border-radius:4px;box-shadow:0 1px 1.5px rgba(50,60,80,.12)"></div>
<div class="t" style="left:136.65px;top:1241.00px;font-size:12.5px;color:#343f4c;letter-spacing:0.372px;">@timestamp</div>
<div class="t" style="left:316.00px;top:1241.00px;font-size:12.5px;color:#2d6dbc;letter-spacing:0.045px;">qaZrSOygTjmu</div>
<div class="t" style="left:494.25px;top:1241.00px;font-size:12.5px;color:#343f4c;letter-spacing:0.530px;">index6</div>
<div class="t" style="left:672.75px;top:1241.00px;font-size:12.5px;color:#343f4c;letter-spacing:0.650px;">node6</div>
<div class="t" style="left:851.75px;top:1241.00px;font-size:12.5px;color:#343f4c;letter-spacing:0.280px;">3.8 ms</div>
<div class="t" style="left:1030.20px;top:1241.00px;font-size:12.5px;color:#343f4c;letter-spacing:0.042px;">9.25 ms</div>
<div class="t" style="left:1208.95px;top:1241.00px;font-size:12.5px;color:#343f4c;letter-spacing:0.170px;">340 KB</div>
<div class="t" style="left:1387.20px;top:1241.00px;font-size:12.5px;color:#343f4c;letter-spacing:0.000px;transform:scaleX(1.446);transform-origin:0.50px 50%;">-</div>
<div class="t" style="left:1565.70px;top:1241.00px;font-size:12.5px;color:#343f4c;letter-spacing:0.027px;">qaZrSOygTjmu</div>
<svg style="left:1785px;top:1236.75px" width="18" height="18" viewBox="0 0 18 18" fill="none" stroke="#bd4b40" stroke-width="1.15"><path d="M0.9 5H16.9" stroke-linecap="round"/><path d="M6.4 5V2.6a1 1 0 0 1 1-1H10.8a1 1 0 0 1 1 1V5"/><path d="M3.4 6.9L4.6 16a1.4 1.4 0 0 0 1.4 1.3H12a1.4 1.4 0 0 0 1.4-1.3L14.5 6.9" stroke-linecap="round"/><path d="M3.7 7.1H9.8M4 10.1H8.9M4.5 13.1H7.7" stroke-linecap="round"/></svg>
<div class="b " style="left:95.5px;top:1266px;width:1719.5px;height:1px;background:#d9dce2"></div>
<div class="b " style="left:104.5px;top:1279.3000000000002px;width:16.200000000000003px;height:16.200000000000045px;background:#fefeff;border:1px solid #c6cad1;border-radius:4px;box-shadow:0 1px 1.5px rgba(50,60,80,.12)"></div>
<div class="t" style="left:136.65px;top:1282.00px;font-size:12.5px;color:#343f4c;letter-spacing:0.372px;">@timestamp</div>
<div class="t" style="left:316.00px;top:1283.00px;font-size:12.5px;color:#2d6dbc;letter-spacing:0.045px;">qaZrSOygTjmu</div>
<div class="t" style="left:494.25px;top:1282.00px;font-size:12.5px;color:#343f4c;letter-spacing:0.530px;">index7</div>
<div class="t" style="left:672.75px;top:1282.00px;font-size:12.5px;color:#343f4c;letter-spacing:0.650px;">node7</div>
<div class="t" style="left:851.75px;top:1282.00px;font-size:12.5px;color:#343f4c;letter-spacing:0.280px;">3.8 ms</div>
<div class="t" style="left:1030.20px;top:1282.00px;font-size:12.5px;color:#343f4c;letter-spacing:0.042px;">9.25 ms</div>
<div class="t" style="left:1208.95px;top:1282.00px;font-size:12.5px;color:#343f4c;letter-spacing:0.170px;">340 KB</div>
<div class="t" style="left:1387.20px;top:1282.00px;font-size:12.5px;color:#343f4c;letter-spacing:0.000px;transform:scaleX(1.446);transform-origin:0.50px 50%;">-</div>
<div class="t" style="left:1565.70px;top:1282.00px;font-size:12.5px;color:#343f4c;letter-spacing:0.027px;">qaZrSOygTjmu</div>
<svg style="left:1785px;top:1278.40px" width="18" height="18" viewBox="0 0 18 18" fill="none" stroke="#bd4b40" stroke-width="1.15"><path d="M0.9 5H16.9" stroke-linecap="round"/><path d="M6.4 5V2.6a1 1 0 0 1 1-1H10.8a1 1 0 0 1 1 1V5"/><path d="M3.4 6.9L4.6 16a1.4 1.4 0 0 0 1.4 1.3H12a1.4 1.4 0 0 0 1.4-1.3L14.5 6.9" stroke-linecap="round"/><path d="M3.7 7.1H9.8M4 10.1H8.9M4.5 13.1H7.7" stroke-linecap="round"/></svg>
<div class="b " style="left:95.5px;top:1308px;width:1719.5px;height:1px;background:#d9dce2"></div>
<div class="b " style="left:104.5px;top:1320.95px;width:16.200000000000003px;height:16.200000000000045px;background:#fefeff;border:1px solid #c6cad1;border-radius:4px;box-shadow:0 1px 1.5px rgba(50,60,80,.12)"></div>
<div class="t" style="left:136.65px;top:1324.00px;font-size:12.5px;color:#343f4c;letter-spacing:0.372px;">@timestamp</div>
<div class="t" style="left:316.00px;top:1324.00px;font-size:12.5px;color:#2d6dbc;letter-spacing:0.045px;">qaZrSOygTjmu</div>
<div class="t" style="left:494.25px;top:1324.00px;font-size:12.5px;color:#343f4c;letter-spacing:0.530px;">index8</div>
<div class="t" style="left:672.75px;top:1324.00px;font-size:12.5px;color:#343f4c;letter-spacing:0.650px;">node8</div>
<div class="t" style="left:851.75px;top:1324.00px;font-size:12.5px;color:#343f4c;letter-spacing:0.280px;">3.8 ms</div>
<div class="t" style="left:1030.20px;top:1324.00px;font-size:12.5px;color:#343f4c;letter-spacing:0.042px;">9.25 ms</div>
<div class="t" style="left:1208.95px;top:1324.00px;font-size:12.5px;color:#343f4c;letter-spacing:0.170px;">340 KB</div>
<div class="t" style="left:1387.20px;top:1324.00px;font-size:12.5px;color:#343f4c;letter-spacing:0.000px;transform:scaleX(1.446);transform-origin:0.50px 50%;">-</div>
<div class="t" style="left:1565.70px;top:1324.00px;font-size:12.5px;color:#343f4c;letter-spacing:0.027px;">qaZrSOygTjmu</div>
<svg style="left:1785px;top:1320.05px" width="18" height="18" viewBox="0 0 18 18" fill="none" stroke="#bd4b40" stroke-width="1.15"><path d="M0.9 5H16.9" stroke-linecap="round"/><path d="M6.4 5V2.6a1 1 0 0 1 1-1H10.8a1 1 0 0 1 1 1V5"/><path d="M3.4 6.9L4.6 16a1.4 1.4 0 0 0 1.4 1.3H12a1.4 1.4 0 0 0 1.4-1.3L14.5 6.9" stroke-linecap="round"/><path d="M3.7 7.1H9.8M4 10.1H8.9M4.5 13.1H7.7" stroke-linecap="round"/></svg>
<div class="b " style="left:95.5px;top:1350px;width:1719.5px;height:1px;background:#d9dce2"></div>
<div class="b " style="left:104.5px;top:1362.6000000000001px;width:16.200000000000003px;height:16.200000000000045px;background:#fefeff;border:1px solid #c6cad1;border-radius:4px;box-shadow:0 1px 1.5px rgba(50,60,80,.12)"></div>
<div class="t" style="left:136.65px;top:1366.00px;font-size:12.5px;color:#343f4c;letter-spacing:0.372px;">@timestamp</div>
<div class="t" style="left:316.00px;top:1366.00px;font-size:12.5px;color:#2d6dbc;letter-spacing:0.045px;">qaZrSOygTjmu</div>
<div class="t" style="left:494.25px;top:1366.00px;font-size:12.5px;color:#343f4c;letter-spacing:0.530px;">index9</div>
<div class="t" style="left:672.75px;top:1366.00px;font-size:12.5px;color:#343f4c;letter-spacing:0.650px;">node9</div>
<div class="t" style="left:851.75px;top:1366.00px;font-size:12.5px;color:#343f4c;letter-spacing:0.280px;">3.8 ms</div>
<div class="t" style="left:1030.20px;top:1366.00px;font-size:12.5px;color:#343f4c;letter-spacing:0.042px;">9.25 ms</div>
<div class="t" style="left:1208.95px;top:1366.00px;font-size:12.5px;color:#343f4c;letter-spacing:0.170px;">340 KB</div>
<div class="t" style="left:1387.20px;top:1366.00px;font-size:12.5px;color:#343f4c;letter-spacing:0.000px;transform:scaleX(1.446);transform-origin:0.50px 50%;">-</div>
<div class="t" style="left:1565.70px;top:1366.00px;font-size:12.5px;color:#343f4c;letter-spacing:0.027px;">qaZrSOygTjmu</div>
<svg style="left:1785px;top:1361.70px" width="18" height="18" viewBox="0 0 18 18" fill="none" stroke="#bd4b40" stroke-width="1.15"><path d="M0.9 5H16.9" stroke-linecap="round"/><path d="M6.4 5V2.6a1 1 0 0 1 1-1H10.8a1 1 0 0 1 1 1V5"/><path d="M3.4 6.9L4.6 16a1.4 1.4 0 0 0 1.4 1.3H12a1.4 1.4 0 0 0 1.4-1.3L14.5 6.9" stroke-linecap="round"/><path d="M3.7 7.1H9.8M4 10.1H8.9M4.5 13.1H7.7" stroke-linecap="round"/></svg>
<div class="b " style="left:95.5px;top:1391px;width:1719.5px;height:1px;background:#d9dce2"></div>
<div class="b " style="left:104.5px;top:1404.25px;width:16.200000000000003px;height:16.200000000000045px;background:#fefeff;border:1px solid #c6cad1;border-radius:4px;box-shadow:0 1px 1.5px rgba(50,60,80,.12)"></div>
<div class="t" style="left:136.65px;top:1407.00px;font-size:12.5px;color:#343f4c;letter-spacing:0.372px;">@timestamp</div>
<div class="t" style="left:316.00px;top:1408.00px;font-size:12.5px;color:#2d6dbc;letter-spacing:0.045px;">qaZrSOygTjmu</div>
<div class="t" style="left:494.25px;top:1407.00px;font-size:12.5px;color:#343f4c;letter-spacing:0.483px;">index99</div>
<div class="t" style="left:672.75px;top:1407.00px;font-size:12.5px;color:#343f4c;letter-spacing:0.580px;">node99</div>
<div class="t" style="left:851.75px;top:1407.00px;font-size:12.5px;color:#343f4c;letter-spacing:0.280px;">3.8 ms</div>
<div class="t" style="left:1030.20px;top:1407.00px;font-size:12.5px;color:#343f4c;letter-spacing:0.042px;">9.25 ms</div>
<div class="t" style="left:1208.95px;top:1407.00px;font-size:12.5px;color:#343f4c;letter-spacing:0.170px;">340 KB</div>
<div class="t" style="left:1387.20px;top:1407.00px;font-size:12.5px;color:#343f4c;letter-spacing:0.000px;transform:scaleX(1.446);transform-origin:0.50px 50%;">-</div>
<div class="t" style="left:1565.70px;top:1407.00px;font-size:12.5px;color:#343f4c;letter-spacing:0.027px;">qaZrSOygTjmu</div>
<svg style="left:1785px;top:1403.35px" width="18" height="18" viewBox="0 0 18 18" fill="none" stroke="#bd4b40" stroke-width="1.15"><path d="M0.9 5H16.9" stroke-linecap="round"/><path d="M6.4 5V2.6a1 1 0 0 1 1-1H10.8a1 1 0 0 1 1 1V5"/><path d="M3.4 6.9L4.6 16a1.4 1.4 0 0 0 1.4 1.3H12a1.4 1.4 0 0 0 1.4-1.3L14.5 6.9" stroke-linecap="round"/><path d="M3.7 7.1H9.8M4 10.1H8.9M4.5 13.1H7.7" stroke-linecap="round"/></svg>
<div class="b " style="left:95.5px;top:1433px;width:1719.5px;height:1px;background:#d9dce2"></div>
<div class="t" style="left:95.30px;top:1451.00px;font-size:12.5px;color:#343f4c;letter-spacing:0.025px;">Rows per page: 10</div>
<svg style="left:207.6px;top:1453.2px" width="12.4" height="7.2" viewBox="0 0 12.4 7.2" fill="none" stroke="#2b3744" stroke-width="1.05"><path d="M0.5 0.5L6.2 6.5L11.9 0.5"/></svg>
<svg style="left:1748px;top:1450px" width="9" height="13" viewBox="0 0 9 13" fill="none" stroke="#2b3744" stroke-width="1.3"><path d="M7.6 0.6L1.4 6.4L7.6 12.2"/></svg>
<svg style="left:1798px;top:1450px" width="9" height="13" viewBox="0 0 9 13" fill="none" stroke="#2b3744" stroke-width="1.3"><path d="M1.4 0.6L7.6 6.4L1.4 12.2"/></svg>
<div class="t" style="left:1773.65px;top:1450.00px;font-size:12.5px;color:#2b64bb;letter-spacing:0.000px;font-weight:700;-webkit-text-stroke:0;">1</div>
<div class="b " style="left:1774.2px;top:1461px;width:6.399999999999864px;height:1px;background:#6f95d0"></div>
</div></body></html>
